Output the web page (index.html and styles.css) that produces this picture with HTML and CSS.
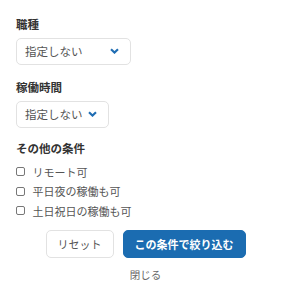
FILE: index.html
```html
<!DOCTYPE html>
<html lang="ja">
<head>
<meta charset="utf-8">
<link rel="stylesheet" href="styles.css">
</head>
<body>
<div class="panel">
  <div class="group">
    <div class="label">職種</div>
    <div class="select wide"><span>指定しない</span>
      <svg class="chev" width="9" height="6" viewBox="0 0 9 6"><path d="M1 1.2 L4.5 4.6 L8 1.2" fill="none" stroke="#1f6db3" stroke-width="2.1"/></svg>
    </div>
  </div>
  <div class="group second">
    <div class="label">稼働時間</div>
    <div class="select"><span>指定しない</span>
      <svg class="chev" width="9" height="6" viewBox="0 0 9 6"><path d="M1 1.2 L4.5 4.6 L8 1.2" fill="none" stroke="#1f6db3" stroke-width="2.1"/></svg>
    </div>
  </div>
  <div class="group last">
    <div class="label">その他の条件</div>
    <ul class="checks">
      <li><span class="box"></span>リモート可</li>
      <li><span class="box"></span>平日夜の稼働も可</li>
      <li><span class="box"></span>土日祝日の稼働も可</li>
    </ul>
  </div>
  <div class="actions">
    <button class="btn reset">リセット</button>
    <button class="btn primary">この条件で絞り込む</button>
  </div>
  <div class="close">閉じる</div>
</div>
</body>
</html>
```
FILE: styles.css
```css
* { box-sizing: border-box; }
html, body { margin: 0; padding: 0; background: #fff; }
body {
  font-family: "Noto Sans CJK JP", "Noto Sans", sans-serif;
  color: #333;
  width: 291px;
}
.panel { padding: 16px 0 0 16px; }
.group { margin-bottom: 14.5px; }
.group.second { margin-bottom: 12.5px; }
.group.last { margin-bottom: 9.5px; }
.label {
  font-size: 11.5px;
  font-weight: 700;
  line-height: 16px;
  color: #333;
  margin-bottom: 5px;
}
.select {
  display: inline-flex;
  align-items: center;
  justify-content: space-between;
  height: 27px;
  border: 1px solid #e2e2e2;
  border-radius: 5px;
  padding: 0 11px 0 8px;
  font-size: 11.5px;
  color: #555;
  width: 93px;
}
.select.wide { width: 115px; }
.chev { display: block; }
.checks { list-style: none; margin: 0; padding: 0; margin-top: 6px; }
.checks li {
  display: flex;
  align-items: center;
  height: 19.5px;
  font-size: 11px;
  color: #555;
}
.box {
  width: 9px; height: 9px;
  border: 1px solid #777;
  border-radius: 2px;
  margin: 0 7.5px 0 0;
  flex: none;
}
.actions {
  display: flex;
  justify-content: center;
  gap: 9px;
  padding-right: 16px;
}
.btn {
  font-family: inherit;
  font-size: 11px;
  height: 27.5px;
  border-radius: 5px;
  cursor: pointer;
}
.reset {
  background: #fff;
  border: 1px solid #e2e2e2;
  color: #555;
  padding: 0 11px;
}
.primary {
  background: #1b6cb1;
  border: 1px solid #1b6cb1;
  color: #fff;
  font-weight: 700;
  padding: 0 11px;
}
.close {
  text-align: center;
  font-size: 10.5px;
  color: #666;
  line-height: 16px;
  margin-top: 9px;
  padding-right: 16px;
}
```
